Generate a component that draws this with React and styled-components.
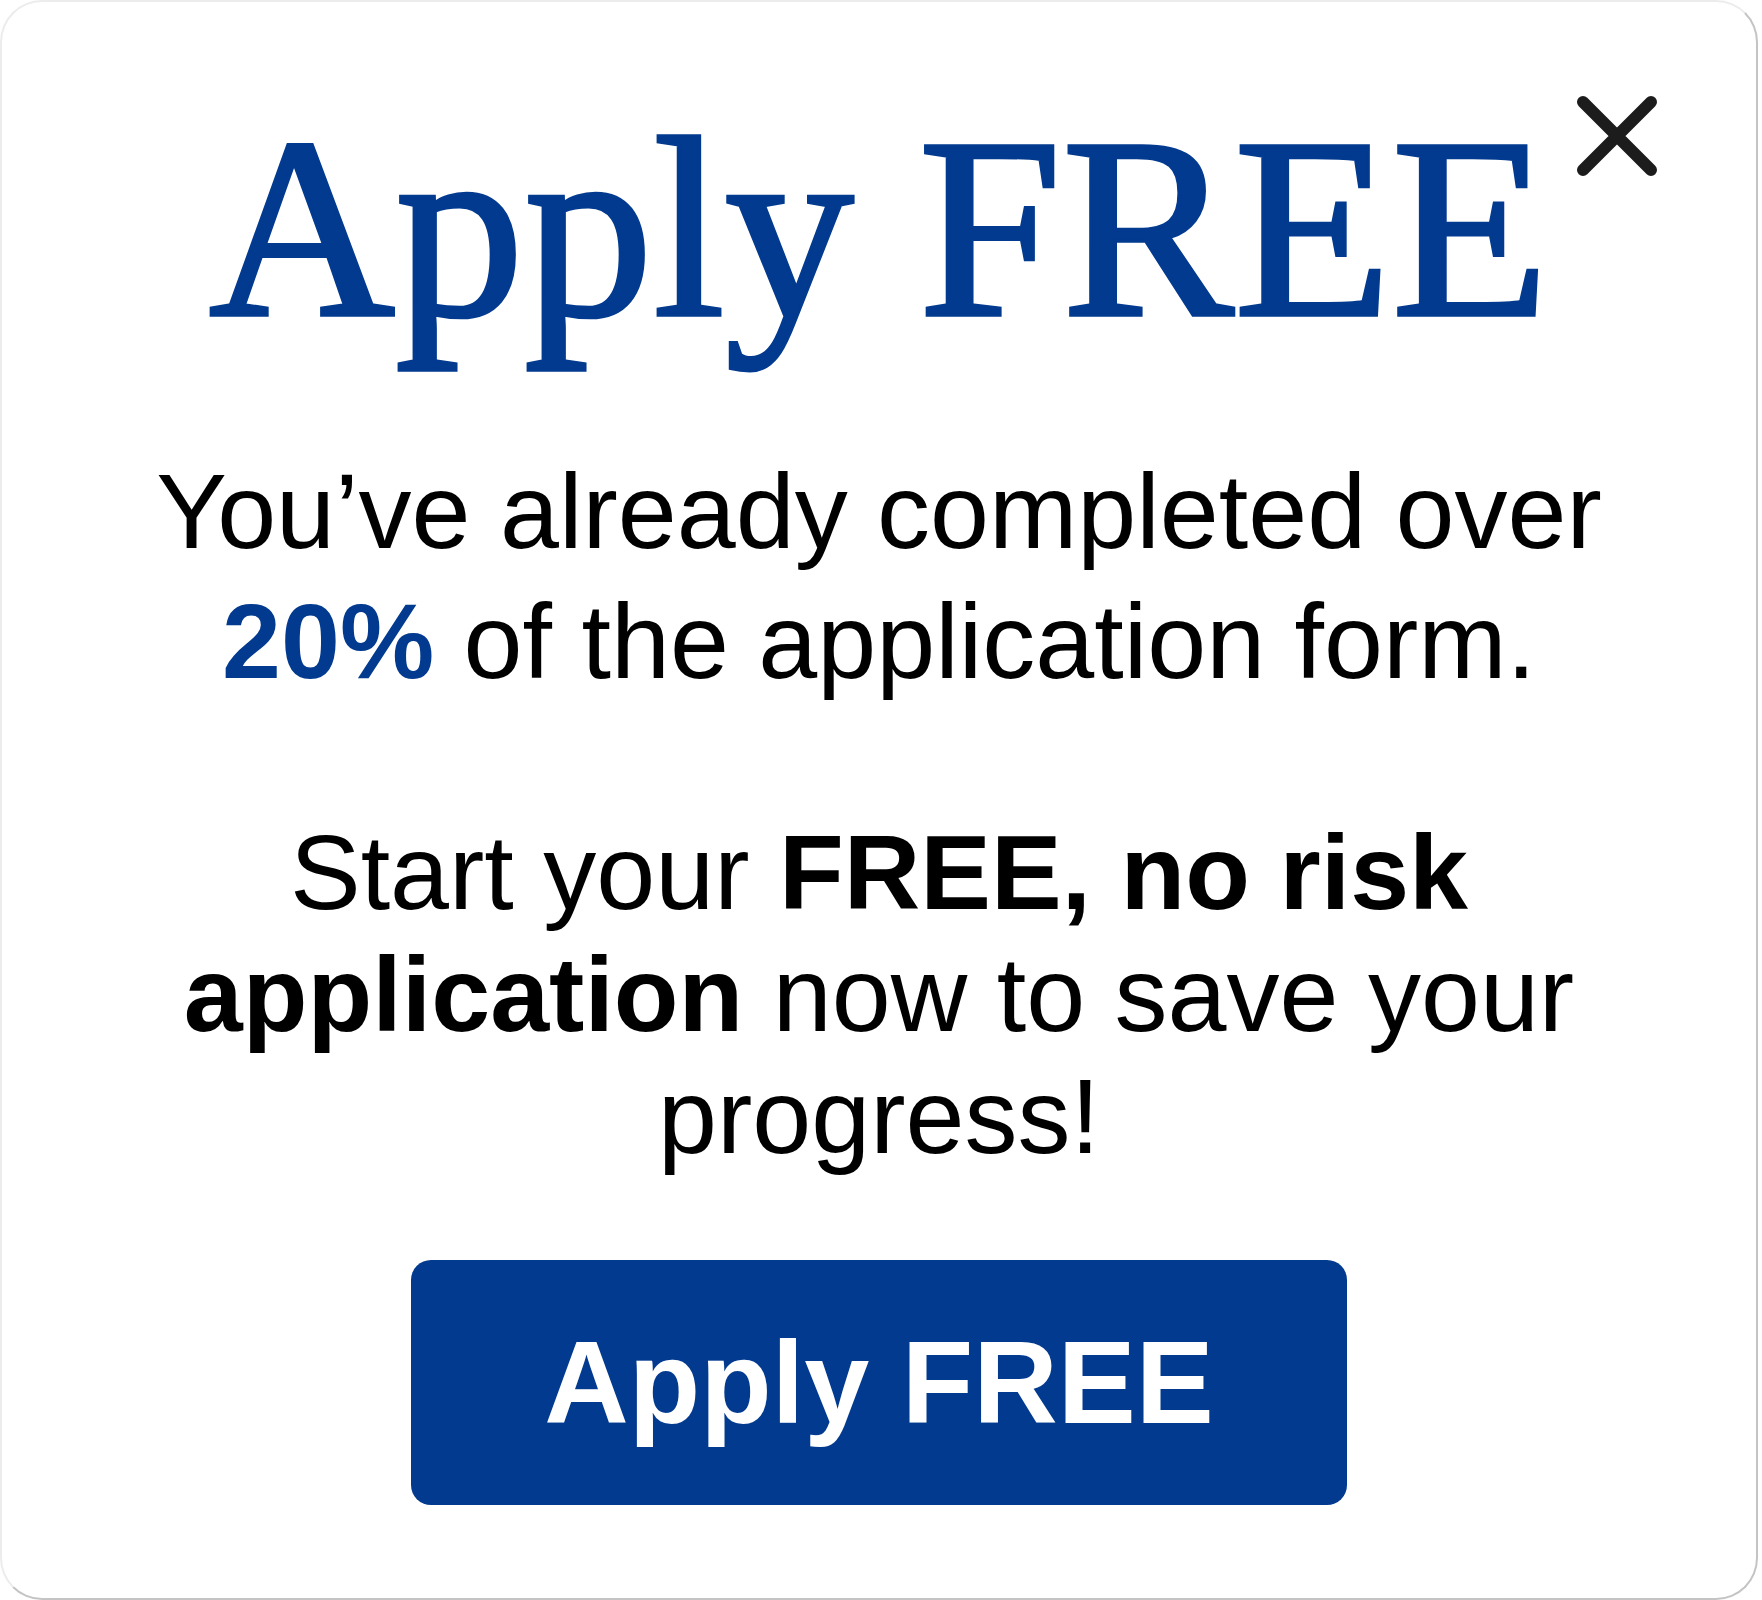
import styled, { createGlobalStyle } from 'styled-components';

const BRAND_BLUE = '#023a8f';

const GlobalStyle = createGlobalStyle`
  html, body {
    margin: 0;
    padding: 0;
    background: #ffffff;
  }

  body {
    font-family: 'Liberation Sans', Arial, sans-serif;
  }
`;

function CloseIcon() {
  return (
    <svg width="82" height="82" viewBox="0 0 82 82" fill="none">
      <path
        d="M7 7 L75 75 M75 7 L7 75"
        stroke="#1c1c1c"
        strokeWidth="12"
        strokeLinecap="round"
      />
    </svg>
  );
}

function SaveProgressModal({ percent, onApply, onClose }) {
  return (
    <Card>
      <CloseButton type="button" aria-label="Close" onClick={onClose}>
        <CloseIcon />
      </CloseButton>
      <Title>Apply FREE</Title>
      <Message spacing={130}>
        You’ve already completed over <Highlight>{percent}%</Highlight> of the
        application form.
      </Message>
      <Message spacing={122} gap={105}>
        Start your <strong>FREE, no risk application</strong> now to save your
        progress!
      </Message>
      <ApplyButton type="button" onClick={onApply}>
        Apply FREE
      </ApplyButton>
    </Card>
  );
}

function App() {
  return (
    <>
      <GlobalStyle />
      <SaveProgressModal percent={20} onApply={() => {}} onClose={() => {}} />
    </>
  );
}

export default App;

const Card = styled.div`
  position: relative;
  box-sizing: border-box;
  width: 1758px;
  height: 1600px;
  padding-top: 97px;
  display: flex;
  flex-direction: column;
  align-items: center;
  background: #ffffff;
  border: 2px solid #ececec;
  border-right-color: #c4c4c4;
  border-bottom-color: #c4c4c4;
  border-radius: 42px;
`;

const CloseButton = styled.button`
  position: absolute;
  top: 93px;
  left: 1574px;
  padding: 0;
  border: none;
  background: none;
  cursor: pointer;
  display: flex;
`;

const Title = styled.h1`
  margin: 0;
  font-family: 'Liberation Serif', 'Times New Roman', serif;
  font-size: 258px;
  font-weight: 400;
  line-height: 258px;
  color: ${BRAND_BLUE};
  -webkit-text-stroke: 3.5px ${BRAND_BLUE};
  white-space: nowrap;
`;

const Message = styled.p`
  width: 1560px;
  margin: ${props => props.gap || 89}px 0 0;
  font-size: 106px;
  line-height: ${props => props.spacing}px;
  color: #000000;
  text-align: center;

  strong {
    font-weight: 700;
  }
`;

const Highlight = styled.strong`
  color: ${BRAND_BLUE};
`;

const ApplyButton = styled.button`
  width: 936px;
  height: 245px;
  margin-top: 83px;
  border: none;
  border-radius: 20px;
  background: ${BRAND_BLUE};
  color: #ffffff;
  font-family: 'Liberation Sans', Arial, sans-serif;
  font-size: 117px;
  font-weight: 700;
  cursor: pointer;
`;
